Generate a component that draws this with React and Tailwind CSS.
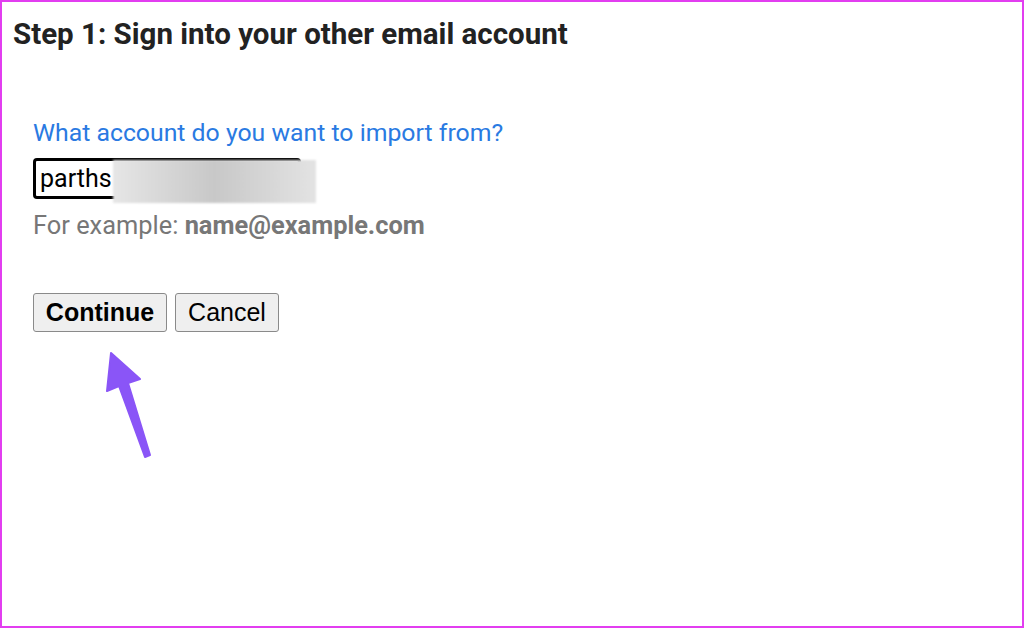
import React from "react";

const Arrow = () => (
  <svg className="absolute left-0 top-0" width="200" height="480" viewBox="0 0 200 480">
    <path d="M109 351 L138 377 L126 381 L148 453 L143 455 L117 384 L105 389 Z" fill="#8a55f7" strokeLinejoin="round" stroke="#8a55f7" strokeWidth="2" />
  </svg>
);

const App = () => {
  return (
    <div className="relative w-[1024px] h-[628px] bg-white border-2 border-[#e23ef0] overflow-hidden font-['Roboto',sans-serif]">
      <div className="pl-[11px] pt-[15px]">
        <h1 className="text-[29.5px] leading-[35px] font-bold text-[#222]">
          Step 1: Sign into your other email account
        </h1>
      </div>

      <div className="pl-[31px] pt-[66px]">
        <div className="text-[24.8px] leading-[29px] text-[#2a7ae2]">
          What account do you want to import from?
        </div>

        <div className="relative mt-[11px] h-[41px] w-[284px]">
          <div className="absolute left-0 top-0 w-[268px] h-[41px] border-[3px] border-black rounded-[4px] flex items-center pl-[4px]">
            <span className="text-[25px] text-black">parths</span>
          </div>
          <div className="absolute left-[80px] top-[2px] w-[203px] h-[43px] bg-gradient-to-r from-[#e6e6e6] via-[#c8c8c8] to-[#e3e3e3] blur-[1px]" />
        </div>

        <div className="mt-[12px] text-[25.4px] leading-[29px] text-[#777]">
          For example: <span className="font-bold">name@example.com</span>
        </div>

        <div className="mt-[53px] flex gap-[8px] font-['Liberation_Sans',sans-serif]">
          <button className="h-[39px] w-[134px] bg-[#efefef] border border-[#8a8a8a] rounded-[3px] text-[25px] font-bold text-black">
            Continue
          </button>
          <button className="h-[39px] w-[104px] bg-[#efefef] border border-[#8a8a8a] rounded-[3px] text-[25px] text-black">
            Cancel
          </button>
        </div>
      </div>

      <Arrow />
    </div>
  );
};

export default App;
